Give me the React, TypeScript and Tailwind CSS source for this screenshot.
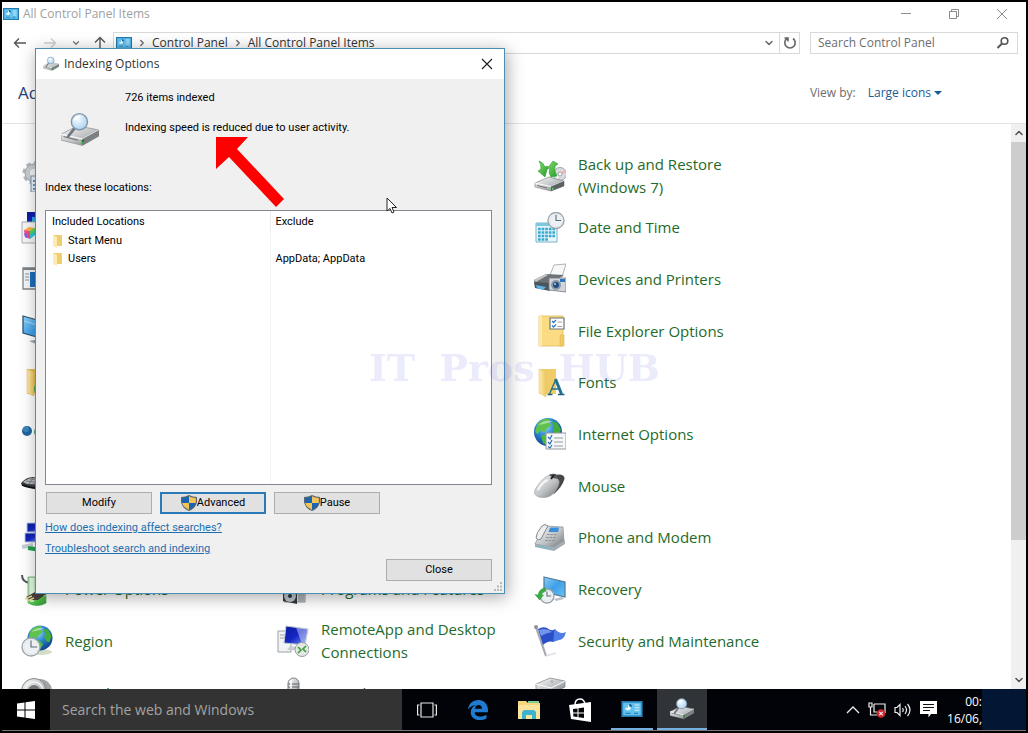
import React from "react";
import { ChevronDown, ChevronRight, ChevronUp } from "lucide-react";

// Shared gradients, referenced by id from every icon below
const Gradients = () => (
  <svg width="0" height="0" className="absolute" aria-hidden="true">
    <defs>
      <linearGradient id="metal" x1="0" y1="0" x2="1" y2="1">
        <stop offset="0" stopColor="#fafafa" />
        <stop offset=".55" stopColor="#bfc2c4" />
        <stop offset="1" stopColor="#6d7072" />
      </linearGradient>
      <linearGradient id="screen" x1="0" y1="0" x2="1" y2="1">
        <stop offset="0" stopColor="#8ed0f8" />
        <stop offset=".5" stopColor="#3d9fe6" />
        <stop offset="1" stopColor="#6cc4f7" />
      </linearGradient>
      <linearGradient id="navy" x1="0" y1="0" x2="1" y2="1">
        <stop offset="0" stopColor="#0a1c9c" />
        <stop offset=".5" stopColor="#1426c4" />
        <stop offset="1" stopColor="#7d9bf0" />
      </linearGradient>
      <linearGradient id="folder" x1="0" y1="0" x2="1" y2="0">
        <stop offset="0" stopColor="#fdeaae" />
        <stop offset="1" stopColor="#efc860" />
      </linearGradient>
      <linearGradient id="leaf" x1="0" y1="0" x2="1" y2="1">
        <stop offset="0" stopColor="#8be06a" />
        <stop offset="1" stopColor="#1f9a2c" />
      </linearGradient>
      <radialGradient id="globe" cx=".4" cy=".3" r=".75">
        <stop offset="0" stopColor="#9bdcf8" />
        <stop offset=".45" stopColor="#2d86cf" />
        <stop offset="1" stopColor="#0b3b86" />
      </radialGradient>
      <radialGradient id="lens" cx=".4" cy=".35" r=".7">
        <stop offset="0" stopColor="#f4fbff" />
        <stop offset="1" stopColor="#a9d0ee" />
      </radialGradient>
    </defs>
  </svg>
);

type IconProps = { className?: string; children?: React.ReactNode };

const Icon = ({ className = "size-8", children }: IconProps) => (
  <svg viewBox="0 0 32 32" className={`${className} shrink-0`} fill="none" aria-hidden="true">
    {children}
  </svg>
);

const Clock = ({ cx, cy, r }: { cx: number; cy: number; r: number }) => (
  <g>
    <circle cx={cx} cy={cy} r={r} fill="#eef1f3" stroke="#9aa4ab" strokeWidth="1.3" />
    <circle cx={cx} cy={cy} r={r - 2} stroke="#c5ccd1" strokeWidth=".7" strokeDasharray="1 2.2" />
    <path d={`M${cx} ${cy - r + 2.5}V${cy}H${cx + r - 3}`} stroke="#5a6a76" strokeWidth="1.1" />
  </g>
);

const Globe = ({ cx, cy, r }: { cx: number; cy: number; r: number }) => (
  <g transform={`translate(${cx} ${cy}) scale(${r / 12})`}>
    <circle r="12" fill="url(#globe)" />
    <path d="M-9-7C-6-11-1-12 2-11L0-8 3-6-1-3-3 0-7-1-9 2-11 0Z" fill="#5fc24b" />
    <path d="M3-9L8-8 11-2 9 4 6 3 4-1 5-4Z" fill="#43ad3c" />
    <path d="M-6 3L-1 2 3 6 0 11-4 10Z" fill="#4fb840" />
    <path d="M-8-6Q-3-11 4-9Q-2-7-8-6Z" fill="#fff" opacity=".45" />
  </g>
);

const Drive = () => (
  <g>
    <path d="M1 23L15 17 30 21V26L17 31 1 27Z" fill="url(#metal)" stroke="#85888a" strokeWidth=".7" />
    <path d="M1 23L17 26.500 30 21" stroke="#fff" strokeWidth=".9" />
    <path d="M17 26.500V31L30 26V21Z" fill="#5c6062" />
    <path d="M3 25.500L13 28" stroke="#6c6f71" strokeWidth="1" />
    <path d="M18 28L19.500 27.500V29.500L18 30Z" fill="#49e04a" />
  </g>
);

const SearchDriveIcon = ({ className }: IconProps) => (
  <Icon className={className}>
    <path d="M0 19.500L14 12.500 32 16V21L18 29 0 24.500Z" fill="url(#metal)" stroke="#8e9193" strokeWidth=".6" />
    <path d="M0 19.500L18 23.500 32 16" stroke="#fff" strokeWidth=".9" />
    <path d="M18 23.500V29L32 21V16Z" fill="#7d8082" />
    <path d="M2 21.500L14 24.500" stroke="#77797b" />
    <path d="M17.500 24.500L19.500 24V27.500L17.500 28Z" fill="#2a6b2c" />
    <path d="M18 26L19 25.700V27.500L18 27.800Z" fill="#3ee045" />
    <path d="M11 15L6 21.500" stroke="#6f7780" strokeWidth="2.300" strokeLinecap="round" />
    <circle cx="15.500" cy="9" r="6.800" fill="url(#lens)" stroke="#8096ab" strokeWidth="1.200" />
    <path d="M11 8Q12.500 4.500 16.500 4.500" stroke="#fff" strokeWidth="1.400" />
  </Icon>
);

const PanelIcon = ({ className }: IconProps) => (
  <svg viewBox="0 0 16 12" className={`${className} shrink-0`} fill="none" aria-hidden="true">
    <rect x=".5" y=".5" width="15" height="11" fill="#3ba6de" stroke="#2678ab" />
    <rect x="1.500" y="1.500" width="13" height="9" fill="#64c1ee" />
    <path d="M3 5A2 2 0 1 0 5 3V5Z" fill="#e8f8ff" />
    <path d="M6 2A2.300 2.300 0 0 1 8 4.300H6Z" fill="#175f98" />
    <path d="M10 3H13.500M10 5H13.500M10 7H13.500" stroke="#d6f1fd" strokeWidth=".8" />
    <path d="M3 9.300H7M9.500 9.300H12.500" stroke="#2b86bd" strokeWidth=".8" />
  </svg>
);

const AdminIcon = () => (
  <Icon>
    <circle cx="13" cy="13" r="9" fill="#c9ced2" stroke="#b3b9be" strokeWidth="5" strokeDasharray="4 3" />
    <circle cx="13" cy="13" r="9" fill="#c9ced2" stroke="#a1a8ae" />
    <circle cx="13" cy="13" r="4" fill="#f3f4f5" />
    <path d="M10 16H30V32H10Z" fill="#eef3f8" stroke="#7b93aa" />
    <path d="M12 21H17M12 25H17M12 29H17" stroke="#2f7fc4" strokeWidth="1.500" />
  </Icon>
);

const ColorIcon = () => (
  <Icon>
    <path d="M6 0H30V14H6Z" fill="url(#navy)" />
    <path d="M11 5Q14 4 15 8V12H11Z" fill="#2aa8e8" />
    <path d="M1 10H22V31H1Z" fill="#f5f6f7" stroke="#a9adb0" />
    <path d="M3 18L8 15 14 16 9 19Z" fill="#ffb13b" />
    <path d="M3 18L9 19V27L4 25Z" fill="#ef4a8c" />
    <path d="M3 21L6 22V26L4 25Z" fill="#8a5be0" />
    <path d="M9 19L14 16V23L9 27Z" fill="#2fc3d8" />
    <path d="M9 19L14 16V19L9 23Z" fill="#5ad84a" />
  </Icon>
);

const DefaultsIcon = () => (
  <Icon>
    <path d="M2 5H31V26H2Z" fill="#f4f5f6" stroke="#7c8288" strokeWidth="1.300" />
    <path d="M2 6H31" stroke="#7c8288" strokeWidth="2" />
    <path d="M4 11H8M4 14H8M4 17H8" stroke="#8c9399" />
    <path d="M9 9H31V24H9Z" fill="#1d6fbd" />
  </Icon>
);

const DisplayIcon = () => (
  <Icon>
    <path d="M2 1L30 9V26L2 18Z" fill="url(#screen)" stroke="#31536e" strokeWidth="1.300" />
    <path d="M3 6L29 14" stroke="#c4e8fc" opacity=".7" />
    <path d="M8 26L20 24 26 30 15 29Z" fill="#97a2aa" />
  </Icon>
);

const HistoryIcon = () => (
  <Icon>
    <path d="M6 2H28V27H6Z" fill="#e7bd55" />
    <path d="M6 2L13 5V29L6 26Z" fill="url(#folder)" stroke="#e0b95a" strokeWidth=".5" />
    <circle cx="21" cy="22" r="8" fill="#3fa547" />
  </Icon>
);

const HomeGroupIcon = () => (
  <Icon>
    <circle cx="6" cy="13" r="5" fill="#23659f" />
    <circle cx="5" cy="11" r="3" fill="#4f9bd2" opacity=".6" />
    <circle cx="19" cy="14" r="6" fill="#3aa680" />
  </Icon>
);

const KeyboardIcon = () => (
  <Icon>
    <path d="M0 13Q5 7 12 7L31 10V18Q20 22 6 17Q0 16 0 13Z" fill="#3b3e41" />
    <path d="M2 12Q7 8 12 8L30 11V15L6 14Z" fill="#b6bbc0" />
    <path d="M5 11L28 14M9 9L29 12M8 14L12 8M13 14L17 9" stroke="#70767b" strokeWidth=".8" />
    <path d="M1 15Q14 20 30 17" stroke="#101214" strokeWidth="1.400" />
  </Icon>
);

const NetworkIcon = () => (
  <Icon>
    <path d="M6 1H22V10H6Z" fill="url(#navy)" stroke="#b9c6e6" />
    <path d="M4 11H18V20H4Z" fill="url(#navy)" stroke="#b9c6e6" />
    <path d="M1 25L12 23" stroke="#c7cdd1" strokeWidth="4" />
    <path d="M7 26L20 28" stroke="#23a150" strokeWidth="4" />
  </Icon>
);

const PowerIcon = () => (
  <Icon>
    <path d="M1 1Q1 8 9 9" stroke="#50565b" strokeWidth="2" />
    <path d="M7 3H25V29Q16 34 7 29Z" fill="#b8e8b5" stroke="#6fa776" strokeWidth=".8" />
    <path d="M7 22H25V29Q16 34 7 29Z" fill="url(#leaf)" />
    <path d="M9 4H13V28H9Z" fill="#fff" opacity=".6" />
    <path d="M5 23L14 18 25 20 17 26 8 26Z" fill="#4a4038" />
    <path d="M4 25L11 22M6 27L13 24" stroke="#e2d29a" strokeWidth="1.400" />
  </Icon>
);

const RegionIcon = () => (
  <Icon>
    <ellipse cx="20" cy="27" rx="11" ry="3" fill="#b5c8a5" opacity=".6" />
    <Globe cx={19} cy={13} r={12.5} />
    <Clock cx={10} cy={22} r={9} />
  </Icon>
);

const SoundIcon = () => (
  <Icon>
    <circle cx="19" cy="14" r="12" fill="#a0a4a7" />
    <circle cx="13" cy="14" r="12.500" fill="url(#metal)" stroke="#85898c" />
    <circle cx="13" cy="14" r="9" stroke="#f3f4f5" strokeWidth="1.500" />
    <circle cx="13" cy="14" r="6" fill="#74787b" />
  </Icon>
);

const ProgramsIcon = () => (
  <Icon>
    <path d="M7 4H28V28H7Z" fill="#dfe2e4" stroke="#8d9194" />
    <path d="M21 5H27V28H21Z" fill="#aeb2b5" />
    <path d="M6 14H20V30L6 27Z" fill="#31383d" />
    <circle cx="13" cy="22" r="6" fill="#bcc7ce" />
    <circle cx="13" cy="22" r="2" fill="#31383d" />
  </Icon>
);

const RemoteIcon = () => (
  <Icon>
    <path d="M1 6H14V27H1Z" fill="#f2f3f5" stroke="#9ca1a6" />
    <path d="M3 10H7M3 13H7" stroke="#9ca1a6" />
    <path d="M9 1L31 4 28 20 7 18Z" fill="url(#navy)" stroke="#c3c8cd" />
    <path d="M19 2.500L31 4 28 19.500 25 19Z" fill="#dfe7fb" opacity=".45" />
    <path d="M10 25H20V22L13 21Z" fill="#c6cbcf" />
    <circle cx="25" cy="24.500" r="7" fill="#e4e6e7" stroke="#9a9ea1" />
    <path d="M21 22L24 25 21 28M29 21L26 24 29 27" stroke="#3da236" strokeWidth="1.700" />
  </Icon>
);

const SpeechIcon = () => (
  <Icon>
    <rect x="11" y="1" width="11" height="24" rx="5.500" fill="url(#metal)" stroke="#777b80" />
    <path d="M11 7H22M11 10H22M11 13H22" stroke="#5f6468" />
    <path d="M14 3V11" stroke="#fff" strokeWidth="1.600" />
  </Icon>
);

const BackupIcon = () => (
  <Icon>
    <circle cx="26" cy="14" r="6.500" fill="#d9dbdf" stroke="#a2a5a9" />
    <path d="M26 14L31 9 32.500 13Z" fill="#f3b4b4" />
    <path d="M26 14L20 16 23 19.500Z" fill="#f6f7f8" />
    <circle cx="26" cy="14" r="2" fill="#fff" stroke="#9c9fa3" />
    <Drive />
    <path d="M5 1Q9 2 11 7L14 6 11 17 4 11 7 9Q7 4 5 1Z" fill="url(#leaf)" stroke="#2a9a35" strokeWidth=".6" />
    <path d="M17 17Q14 13 16 8L13 9 19 1 24 4 21 6Q20 11 23 16Z" fill="url(#leaf)" stroke="#2a9a35" strokeWidth=".6" />
  </Icon>
);

const DateIcon = () => (
  <Icon>
    <path d="M2 11H23V30H2Z" fill="#e6f6fb" stroke="#7fb0c4" />
    <path d="M2 11H23V14H2Z" fill="#7cc8de" />
    <path d="M4 17H21M4 20.500H21M4 24H21M4 27.500H14" stroke="#3aa9cf" strokeWidth="2.400" strokeDasharray="2.700 .9" />
    <Clock cx={22} cy={8.5} r={8} />
  </Icon>
);

const PrinterIcon = () => (
  <Icon>
    <path d="M16 12L20 2 32 1 28 14Z" fill="#f7f8f9" stroke="#9b9fa2" strokeWidth=".8" />
    <path d="M0 17L12 11 30 12 18 20 1 22Z" fill="#6e7276" />
    <path d="M0 17L12 11 14 12 2 19Z" fill="#c4c7c9" />
    <path d="M0 19L16 20V28L1 25Z" fill="#4b555e" />
    <path d="M2 22L12 24 9 27 3 25Z" fill="#5fb1e6" />
    <path d="M15 15H32V29L15 27Z" fill="#d2d6da" stroke="#74797e" strokeWidth=".8" />
    <path d="M26 16H31V19H26Z" fill="#2b76bd" />
    <circle cx="22" cy="22" r="5" fill="#8c97a2" />
    <circle cx="22" cy="22" r="3" fill="#1e4c86" />
    <circle cx="21" cy="21" r="1" fill="#a8d7ff" />
  </Icon>
);

const FileOptionsIcon = () => (
  <Icon>
    <path d="M5 1H29V31H5Z" fill="#fbdc83" stroke="#dfb95c" strokeWidth=".8" />
    <path d="M5 1H8V31H5Z" fill="#fdeab2" />
    <path d="M26 20H30V31H26Z" fill="#f1c95c" stroke="#dfb95c" strokeWidth=".6" />
    <path d="M16 3H30V14H16Z" fill="#fdfdfd" stroke="#6c737a" strokeWidth="1.200" />
    <path d="M18 6L19.500 7.500 22 5M18 10.500L19.500 12 22 9.500" stroke="#2a78c8" strokeWidth="1.300" />
    <path d="M23.500 7H28M23.500 11.500H28" stroke="#9aa0a6" />
  </Icon>
);

const FontsIcon = () => (
  <Icon>
    <path d="M5 2H22V27H5Z" fill="#f0cb68" />
    <path d="M5 2L12 5V30L5 26Z" fill="url(#folder)" stroke="#e3c06a" strokeWidth=".5" />
    <path d="M15.500 27L21.500 13" stroke="#23708f" strokeWidth="1.300" />
    <path d="M21.500 12L27.500 27" stroke="#23708f" strokeWidth="3" />
    <path d="M17.500 22H25" stroke="#23708f" strokeWidth="1.500" />
    <path d="M13.500 27.500H18.500M24 27.500H30.500" stroke="#1b5f80" strokeWidth="1.300" />
  </Icon>
);

const InternetIcon = () => (
  <Icon>
    <Globe cx={14} cy={14} r={14} />
    <path d="M12 15H32V31H12Z" fill="#f6f7f8" stroke="#959a9e" />
    <path d="M14 19L16 21 18 17M14 24L16 26 18 22M14 28.500L16 30 18 27" stroke="#2a6fb8" strokeWidth="1.200" />
    <path d="M20 20H29M20 24H29M20 28H29" stroke="#989da2" />
  </Icon>
);

const MouseIcon = () => (
  <Icon>
    <path d="M20 5Q31 3 30.500 9Q28 17 20 24L17 14Z" fill="#45474b" />
    <path d="M1 20Q6 10 15 5Q22 4 25 11Q26 15 20 23Q14 29 5 27Q-1 25 1 20Z" fill="url(#metal)" stroke="#97999c" strokeWidth=".6" />
    <path d="M15 5Q18 3 22 4L24 9 19 8Z" fill="#55585c" />
    <path d="M20 5L17 9" stroke="#1e2022" strokeWidth="2" />
    <path d="M4 20Q8 12 14 10" stroke="#fff" strokeWidth="2" opacity=".8" />
  </Icon>
);

const PhoneIcon = () => (
  <Icon>
    <path d="M3 18L11 4 29 5 30 20 21 26 1 22Z" fill="url(#metal)" stroke="#888c90" strokeWidth=".7" />
    <path d="M1 22L20 25 31 18V22L20 29 1 25Z" fill="#a3adb3" />
    <path d="M3 24L18 27" stroke="#7fb9c8" strokeWidth="1.600" />
    <path d="M2 16Q2 11 8 4Q11 1 14 4Q11 9 7 17Q4 19 2 16Z" fill="#eceeef" stroke="#777c80" strokeWidth=".9" />
    <path d="M16 5.500H25L24 10H14.500Z" fill="#3a8fdb" />
    <path d="M13 12.500H23M12 15.500H22M11 18.500H21" stroke="#8b9196" strokeWidth="1.200" strokeDasharray="2.500 1" />
  </Icon>
);

const RecoveryIcon = () => (
  <Icon>
    <path d="M10 3L31 8V23L10 18Z" fill="url(#screen)" stroke="#4e7894" strokeWidth="1.200" />
    <path d="M20 25L28 23 30 25 22 27Z" fill="#b9c1c6" />
    <Clock cx={13} cy={22} r={7} />
    <path d="M11 14Q5 15 4 21L1 20.500 5.500 26 9.500 21H7.500Q8 18 12 17Z" fill="#38ae42" stroke="#208a2c" strokeWidth=".4" />
  </Icon>
);

const FlagIcon = () => (
  <Icon>
    <path d="M2 2L12 31" stroke="#a9adb2" strokeWidth="2.300" />
    <circle cx="2" cy="2" r="2" fill="#8d9196" />
    <path d="M4 4Q9 1 13 3Q18 7 21 4L20 17Q14 15 9 20Z" fill="#2b4fc8" />
    <path d="M21 4Q26 10 32 7Q30 15 25 15L19 17Z" fill="#4f7ee6" />
    <path d="M5 5Q12 2 18 7Q12 8 7 11Z" fill="#86a8f4" opacity=".8" />
    <path d="M12 31L22 28" stroke="#dcdfe3" strokeWidth="1.600" />
  </Icon>
);

const StorageIcon = () => (
  <Icon>
    <path d="M2 7L16 1 31 4V10L17 17 2 13Z" fill="url(#metal)" stroke="#808386" strokeWidth=".7" />
    <path d="M2 7L17 11 31 4" stroke="#fff" />
    <path d="M2 15L17 19 31 12V20L17 28 2 22Z" fill="url(#metal)" />
    <circle cx="18" cy="4.500" r="1.500" fill="#b0b3b6" />
  </Icon>
);

const Shield = () => (
  <svg viewBox="0 0 16 16" className="size-4 shrink-0" aria-hidden="true">
    <path d="M8 0Q4 2 0 2V7Q1 13 8 16Q15 13 16 7V2Q12 2 8 0Z" fill="#5b6670" />
    <path d="M8 1.200V8H1.200V3Q5 3 8 1.200Z" fill="#1b64b0" />
    <path d="M8 1.200V8H14.800V3Q11 3 8 1.200Z" fill="#f2c45a" />
    <path d="M1.200 8H8V14.700Q2 12 1.200 8Z" fill="#f2c45a" />
    <path d="M14.800 8H8V14.700Q14 12 14.800 8Z" fill="#1b64b0" />
  </svg>
);

type Item = { icon?: () => React.JSX.Element; label?: string };

// Row by row, three items to a row
const items: Item[] = [
  { icon: AdminIcon },
  {},
  { icon: BackupIcon, label: "Back up and Restore (Windows 7)" },
  { icon: ColorIcon },
  {},
  { icon: DateIcon, label: "Date and Time" },
  { icon: DefaultsIcon },
  {},
  { icon: PrinterIcon, label: "Devices and Printers" },
  { icon: DisplayIcon },
  {},
  { icon: FileOptionsIcon, label: "File Explorer Options" },
  { icon: HistoryIcon },
  {},
  { icon: FontsIcon, label: "Fonts" },
  { icon: HomeGroupIcon },
  {},
  { icon: InternetIcon, label: "Internet Options" },
  { icon: KeyboardIcon },
  {},
  { icon: MouseIcon, label: "Mouse" },
  { icon: NetworkIcon },
  {},
  { icon: PhoneIcon, label: "Phone and Modem" },
  { icon: PowerIcon, label: "Power Options" },
  { icon: ProgramsIcon, label: "Programs and Features" },
  { icon: RecoveryIcon, label: "Recovery" },
  { icon: RegionIcon, label: "Region" },
  { icon: RemoteIcon, label: "RemoteApp and Desktop Connections" },
  { icon: FlagIcon, label: "Security and Maintenance" },
  { icon: SoundIcon, label: "Sound" },
  { icon: SpeechIcon, label: "Speech Recognition" },
  { icon: StorageIcon, label: "Storage Spaces" },
];

const locations = [
  { name: "Start Menu", exclude: "" },
  { name: "Users", exclude: "AppData; AppData" },
];

const TitleBar = () => (
  <header className="flex h-6 items-center pl-px pr-4 text-xs text-[#a0a0a0]">
    <PanelIcon className="h-3 w-4" />
    <h1 className="ml-1 flex-1">All Control Panel Items</h1>
    <div className="flex gap-8">
      <button aria-label="Minimize" className="flex size-4 items-center justify-center">
        <svg viewBox="0 0 12 12" className="size-3" stroke="#8b8b8b"><path d="M1 5.500H11" /></svg>
      </button>
      <button aria-label="Restore" className="flex size-4 items-center justify-center">
        <svg viewBox="0 0 12 12" className="size-3" fill="none" stroke="#8b8b8b">
          <path d="M1.500 3.500H8.500V10.500H1.500ZM3.500 3V1.500H10.500V8.500H9" />
        </svg>
      </button>
      <button aria-label="Close window" className="flex size-4 items-center justify-center">
        <svg viewBox="0 0 12 12" className="size-3" stroke="#8b8b8b"><path d="M1 1L11 11M11 1L1 11" /></svg>
      </button>
    </div>
  </header>
);

const Arrow = ({ d, color }: { d: string; color: string }) => (
  <svg viewBox="0 0 14 14" className="size-[14px]" fill="none" stroke={color} strokeWidth="1.400" aria-hidden="true">
    <path d={d} />
  </svg>
);

const AddressBar = () => (
  <nav className="mt-1.5 flex h-[22px] items-stretch pr-2 text-xs text-[#333]">
    <div className="flex w-[111px] items-center gap-3 pl-[11px]">
      <button aria-label="Back"><Arrow d="M13 7H1.500M6 2.500L1.500 7 6 11.500" color="#555" /></button>
      <button aria-label="Forward" className="ml-1"><Arrow d="M1 7H12.500M8 2.500L12.500 7 8 11.500" color="#d0d0d0" /></button>
      <button aria-label="Recent" className="ml-0.5"><ChevronDown size={10} color="#777" strokeWidth={3} /></button>
      <button aria-label="Up"><Arrow d="M7 14V1.500M2 6.500L7 1.500 12 6.500" color="#555" /></button>
    </div>
    <div className="flex flex-1 border border-[#d9d9d9]">
      <div className="flex flex-1 items-center gap-[5px] pl-0.5">
        <PanelIcon className="h-3 w-4" />
        <ChevronRight size={10} strokeWidth={3} color="#666" />
        <a href="#cp">Control Panel</a>
        <ChevronRight size={10} strokeWidth={3} color="#666" />
        <a href="#all">All Control Panel Items</a>
      </div>
      <button aria-label="Previous locations" className="px-1"><ChevronDown size={12} strokeWidth={3} color="#666" /></button>
      <button aria-label="Refresh" className="flex w-5 items-center justify-center border-l border-[#d9d9d9]">
        <svg viewBox="0 0 14 14" className="size-[14px]" fill="none" stroke="#666" strokeWidth="1.600">
          <path d="M10 2.500A5.200 5.200 0 1 1 4 2.500M1.500 2H5V5.500" />
        </svg>
      </button>
    </div>
    <label className="ml-2.5 flex w-[208px] items-center border border-[#d9d9d9] px-[7px]">
      <input aria-label="Search Control Panel" placeholder="Search Control Panel" className="w-full min-w-0 flex-1 outline-none placeholder:text-[#6d6d6d]" />
      <svg viewBox="0 0 14 14" className="size-3.5" fill="none" stroke="#555" strokeWidth="1.600" aria-hidden="true">
        <circle cx="8.500" cy="5" r="3.300" />
        <path d="M6 7.500L1.500 12" strokeWidth="2" />
      </svg>
    </label>
  </nav>
);

const ItemGrid = () => (
  <main className="flex-1 overflow-hidden">
    <div className="mt-[26px] grid h-[569px] grid-cols-[256px_257px_256px] grid-rows-11 pl-[19px]">
      {items.map(({ icon: ItemIcon, label }, i) => (
        <div key={i} className="flex items-center gap-3">
          {ItemIcon && <ItemIcon />}
          {label && (
            <a href="#item" className="w-[190px] text-[15px] leading-[23px] text-[#1f6b2a]">
              {label}
            </a>
          )}
        </div>
      ))}
    </div>
  </main>
);

const ControlPanel = () => (
  <section className="flex min-h-0 flex-1 flex-col bg-white">
    <TitleBar />
    <AddressBar />
    <div className="flex h-[70px] items-center border-b border-[#e0e3e6] pr-[84px] pt-2">
      <h2 className="flex-1 pl-4 text-[17px] text-[#1f3f77]">Adjust</h2>
      <span className="text-xs text-[#6d6d6d]">View by:</span>
      <button className="ml-3 flex items-center gap-[3px] text-xs text-[#1a5c94]">
        Large icons
        <svg viewBox="0 0 8 4" className="h-1 w-2" aria-hidden="true"><path d="M0 0H8L4 4Z" fill="#1a5c94" /></svg>
      </button>
    </div>
    <div className="flex min-h-0 flex-1">
      <ItemGrid />
      <div className="flex w-[15px] flex-col items-center bg-[#f0f0f0]" aria-hidden="true">
        <ChevronUp size={12} strokeWidth={3} color="#505050" className="my-[3px]" />
        <div className="h-[398px] w-full bg-[#cdcdcd]" />
        <div className="flex-1" />
        <ChevronDown size={12} strokeWidth={3} color="#505050" className="my-[3px]" />
      </div>
    </div>
  </section>
);

const buttonClass = "flex h-[22px] w-[106px] items-center justify-center border border-[#adadad] bg-[#e1e1e1]";

const IndexingDialog = () => (
  <div
    role="dialog"
    aria-label="Indexing Options"
    className="absolute left-[35px] top-[48px] w-[470px] border border-[#4a8fb5] bg-[#f0f0f0] font-[Roboto,sans-serif] text-[11px] leading-[18px] text-black shadow-[2px_3px_16px_rgba(0,0,0,0.35)]"
  >
    <div className="flex h-[30px] items-center bg-white px-[7px] font-['Open_Sans',sans-serif] text-xs text-[#333]">
      <SearchDriveIcon className="size-4" />
      <h2 className="ml-[5px] flex-1">Indexing Options</h2>
      <button aria-label="Close dialog">
        <svg viewBox="0 0 12 12" className="mr-1 size-3" stroke="#222" strokeWidth="1.200"><path d="M1 1L11 11M11 1L1 11" /></svg>
      </button>
    </div>

    <div className="pb-3 pl-[9px] pr-3">
      <div className="flex pt-[10px]">
        <div className="w-20 pl-4 pt-[22px]"><SearchDriveIcon className="size-[38px]" /></div>
        <div>
          <p>726 items indexed</p>
          <p className="mt-3">Indexing speed is reduced due to user activity.</p>
        </div>
      </div>
      <p className="mt-[30px]">Index these locations:</p>

      <div className="mt-[13px] h-[275px] border border-[#828790] bg-white">
        <table className="h-full w-full table-fixed text-left">
          <thead>
            <tr className="h-[21px]">
              <th className="w-[224px] border-r border-[#ececec] pl-1.5 pt-px font-normal">Included Locations</th>
              <th className="pl-[5px] pt-px font-normal">Exclude</th>
            </tr>
          </thead>
          <tbody>
            {locations.map((l) => (
              <tr key={l.name} className="h-[18px]">
                <td className="border-r border-[#f4f4f4] p-0 pl-1.5">
                  <span className="flex items-center gap-1">
                    <svg viewBox="0 0 12 14" className="h-[14px] w-3" aria-hidden="true">
                      <path d="M1 1H10V12H1Z" fill="#f0cd6e" />
                      <path d="M1 1L5 3V14L1 12Z" fill="#fdebb4" />
                    </svg>
                    {l.name}
                  </span>
                </td>
                <td className="pl-[5px]">{l.exclude}</td>
              </tr>
            ))}
            <tr>
              <td className="border-r border-[#f4f4f4]" />
              <td />
            </tr>
          </tbody>
        </table>
      </div>

      <div className="mt-[7px] flex gap-2 pl-px">
        <button className={buttonClass}>Modify</button>
        <button className="flex h-[22px] w-[106px] items-center justify-center border-2 border-[#2a7ab8] bg-[#e1e1e1]">
          <Shield />Advanced
        </button>
        <button className={buttonClass}><Shield />Pause</button>
      </div>
      <div className="mt-[5px] flex flex-col items-start gap-[3px] text-[#1b6fae] underline">
        <a href="#how">How does indexing affect searches?</a>
        <a href="#troubleshoot">Troubleshoot search and indexing</a>
      </div>
      <div className="mt-px flex justify-end">
        <button className={buttonClass}>Close</button>
      </div>
    </div>

    <svg viewBox="0 0 10 10" className="absolute bottom-px right-px size-2.5" fill="#b8b8b8" aria-hidden="true">
      <path d="M7 0h2v2H7zM4 3.500h2v2H4zM7 3.500h2v2H7zM1 7h2v2H1zM4 7h2v2H4zM7 7h2v2H7z" />
    </svg>
  </div>
);

const Taskbar = () => (
  <footer className="flex h-[41px] items-stretch bg-[#020308] text-white">
    <button aria-label="Start" className="flex w-12 items-center justify-center bg-black">
      <svg viewBox="0 0 18 18" className="size-[18px]" fill="#fff">
        <path d="M0 2.500L7.500 1.500V8.500H0ZM8.500 1.300L18 0V8.500H8.500ZM0 9.500H7.500V16.500L0 15.500ZM8.500 9.500H18V18L8.500 16.700Z" />
      </svg>
    </button>
    <input
      aria-label="Search the web and Windows"
      placeholder="Search the web and Windows"
      className="w-[352px] bg-[#333] px-3 text-sm outline-none placeholder:text-[#a3a3a3]"
    />
    <button aria-label="Task view" className="flex w-[50px] items-center justify-center">
      <svg viewBox="0 0 20 16" className="h-4 w-5" fill="none" stroke="#e6e6e6" strokeWidth="1.200">
        <path d="M4 1H16V15H4ZM2.500 3H.6V13H2.500M17.500 3H19.400V13H17.500" />
      </svg>
    </button>
    <button aria-label="Edge" className="flex w-[52px] items-center justify-center">
      <svg viewBox="0 0 20 20" className="size-5" fill="#1f7ad0">
        <path d="M0 9.500C.8 3.500 5 0 10.300 0 16.500 0 20 4.500 20 10.200V12.200H6.700C6.900 15.200 9.300 16.500 12.300 16.500 14.700 16.500 16.700 15.800 18.500 14.700V18.500C16.600 19.600 14.200 20 11.600 20 6 20 2.700 16.700 2.700 12.200 2.700 9 4.600 6.400 7.600 5 4.400 5.300 1.900 6.900 0 9.500ZM6.800 8.700H13.900C13.900 6.300 12.700 5 10.600 5 8.500 5 7.100 6.500 6.800 8.700Z" />
      </svg>
    </button>
    <button aria-label="File Explorer" className="flex w-[50px] items-center justify-center">
      <svg viewBox="0 0 24 20" className="h-5 w-6">
        <path d="M1 1H9L11 3H23V19H1Z" fill="#f5d77c" />
        <path d="M1 5H23V19H1Z" fill="#fbe59d" />
        <path d="M11 1H22V3H11Z" fill="#7fcf9d" />
        <path d="M5 19V12L7 10H17L19 12V19H15V15H9V19Z" fill="#3eb3cf" />
      </svg>
    </button>
    <button aria-label="Store" className="flex w-[51px] items-center justify-center">
      <svg viewBox="0 0 22 24" className="h-6 w-[22px]">
        <path d="M6 7Q6 1 11 1Q15 1 16 6" fill="none" stroke="#fff" strokeWidth="1.500" />
        <path d="M0 7L22 4V24L2 21Z" fill="#fff" />
        <path d="M4 11L8.500 10.500V14.500H4.200ZM9.500 10.300L15 9.600V14.500H9.500ZM4.200 15.500H8.500V19L4.400 18.500ZM9.500 15.500H15V19.900L9.500 19.200Z" fill="#05060a" />
      </svg>
    </button>
    <button aria-label="Control Panel" className="ml-1.5 mr-1 flex w-[42px] items-center justify-center border-b-2 border-[#76b0e2]">
      <PanelIcon className="h-4 w-[22px]" />
    </button>
    <button aria-label="Indexing Options" className="flex w-[50px] items-center justify-center border-b-2 border-[#76b0e2] bg-[#303338]">
      <SearchDriveIcon className="size-6" />
    </button>
    <div className="flex flex-1 items-center justify-end gap-2">
      <button aria-label="Show hidden icons">
        <svg viewBox="0 0 14 8" className="h-2 w-3.5" fill="none" stroke="#eee" strokeWidth="1.300"><path d="M1 7L7 1 13 7" /></svg>
      </button>
      <button aria-label="Network">
        <svg viewBox="0 0 18 16" className="h-4 w-[18px]" fill="none" stroke="#eee" strokeWidth="1.200">
          <path d="M6 2H17V11M1 1H4V5H1ZM2.500 5V13H9M6 2V10H9" />
          <circle cx="13" cy="11.500" r="4.300" fill="#d22630" stroke="none" />
          <path d="M11.300 9.800L14.700 13.200M14.700 9.800L11.300 13.200" />
        </svg>
      </button>
      <button aria-label="Volume">
        <svg viewBox="0 0 18 16" className="h-4 w-[18px]" fill="none" stroke="#eee" strokeWidth="1.200">
          <path d="M1 5.500H3L6 2.500V13.500L3 10.500H1ZM8.500 6Q10 8 8.500 10M11 4Q14 8 11 12M13.500 2Q18.500 8 13.500 14" />
        </svg>
      </button>
      <button aria-label="Notifications">
        <svg viewBox="0 0 18 17" className="h-[17px] w-[18px]">
          <path d="M0 0H17V13H11L8.500 16.500V13H0Z" fill="#fff" />
          <path d="M3 3.500H14M3 6.500H14M3 9.500H10" stroke="#111" strokeWidth="1.200" />
        </svg>
      </button>
      <div className="w-9 text-right text-xs leading-[17px]">
        <div>00:</div>
        <div>16/06,</div>
      </div>
    </div>
    <div className="w-[44px] bg-[#031633]" />
  </footer>
);

const App = () => (
  <div className="relative flex h-screen flex-col overflow-hidden bg-black px-[2px] pt-[2px] font-['Open_Sans',sans-serif]">
    <Gradients />
    <ControlPanel />
    <Taskbar />
    <div className="mb-[2px] h-px bg-[#777]" />
    <IndexingDialog />

    {/* Watermark, red pointer and mouse cursor sit over the windows */}
    <div className="pointer-events-none absolute left-[369px] top-[355px] flex w-[291px] justify-between font-['DejaVu_Serif',serif] text-[38px] font-bold leading-[26px] text-[#6464e6]/15">
      <span>IT</span>
      <span>Pros</span>
      <span>HUB</span>
    </div>
    <svg viewBox="0 0 70 70" className="pointer-events-none absolute left-[215px] top-[137px] size-[70px]" aria-hidden="true">
      <path d="M1 0H33L22 12 69 62 61 70 14 20 1 32Z" fill="#fe0000" />
    </svg>
    <svg viewBox="0 0 12 18" className="pointer-events-none absolute left-[386px] top-[197px] h-[18px] w-3" aria-hidden="true">
      <path d="M1 1V14L4 11.500 6 16 8 15 6 10.500H10.500Z" fill="#fff" stroke="#222" />
    </svg>
  </div>
);

export default App;
